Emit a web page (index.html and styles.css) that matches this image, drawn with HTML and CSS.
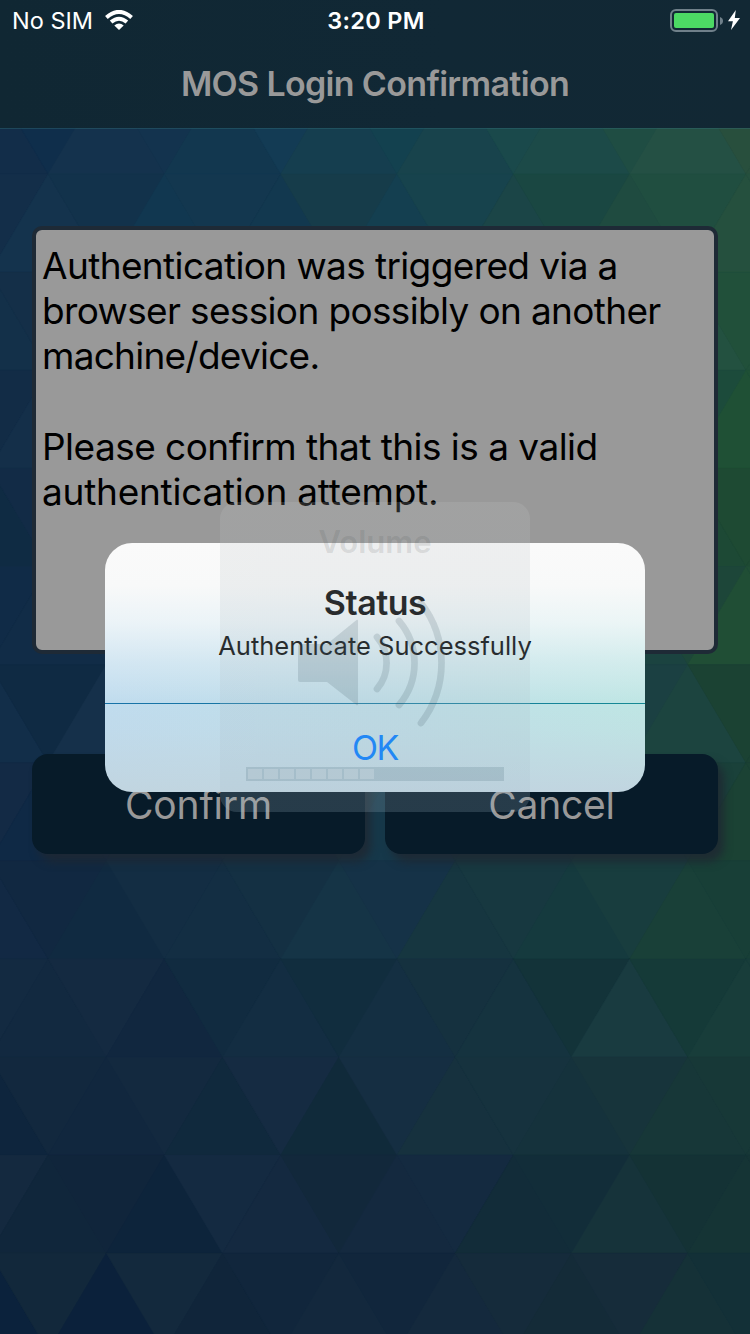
FILE: index.html
```html
<!DOCTYPE html>
<html lang="en">
<head>
<meta charset="utf-8">
<title>MOS Login Confirmation</title>
<link rel="stylesheet" href="styles.css">
</head>
<body>
<div class="screen">
  <svg class="wallpaper" id="wallpaper" viewBox="0 0 750 1334" aria-hidden="true"></svg>
  <header class="header">
    <div class="statusbar">
      <div class="carrier"><span class="carrier-name">No SIM</span>
        <svg class="wifi" viewBox="0 0 28 20"><path d="M14 20L9.3 15.4Q14 11.8 18.7 15.4Z"/><path class="wave" d="M6.1 12Q14 5.4 21.9 12"/><path class="wave" d="M1.4 7.4Q14 -3.6 26.6 7.4"/></svg>
      </div>
      <div class="clock">3:20 PM</div>
      <div class="power">
        <div class="battery"><div class="charge"></div></div>
        <svg class="nub" viewBox="0 0 3 8"><path d="M0 0Q3 1.2 3 4T0 8Z"/></svg>
        <svg class="bolt" viewBox="0 0 12 20"><path d="M7.8 0L0 11.2H4.9L3 20L12 8H6.8Z"/></svg>
      </div>
    </div>
    <h1 class="title">MOS Login Confirmation</h1>
  </header>
  <main class="content">
    <div class="notice">
      <p><span class="l1">Authentication was triggered via a</span><br><span class="l2">browser session possibly on another</span><br><span class="l3">machine/device.</span></p>
      <p><span class="l4">Please confirm that this is a valid</span><br><span class="l5">authentication attempt.</span></p>
    </div>
    <div class="actions">
      <button class="btn">Confirm</button>
      <button class="btn">Cancel</button>
    </div>
  </main>
  <section class="alert" role="alertdialog">
    <div class="alert-body">
      <h2 class="alert-title">Status</h2>
      <p class="alert-text">Authenticate Successfully</p>
    </div>
    <button class="alert-ok">OK</button>
  </section>
  <section class="volume">
    <div class="volume-title">Volume</div>
    <svg class="speaker" viewBox="0 0 150 126">
      <path class="cone" d="M2 45H29L58.5 21Q60 20 60 22V105Q60 107 58.5 106L29 83H2Q0 83 0 81V47Q0 45 2 45Z"/>
      <path class="sound" d="M79 38A40 40 0 0 1 79 90"/>
      <path class="sound" d="M101 22A64.6 64.6 0 0 1 101 106"/>
      <path class="sound" d="M123 4A98 98 0 0 1 123 124"/>
    </svg>
    <div class="level"><i></i><i></i><i></i><i></i><i></i><i></i><i></i><i></i></div>
  </section>
</div>
<script src="wallpaper.js"></script>
</body>
</html>
```
FILE: styles.css
```css
* { box-sizing: border-box; }
body { margin: 0; font-family: Inter, "Liberation Sans", sans-serif; }
h1, h2, p { margin: 0; }
button { border: 0; padding: 0; font: inherit; }
.screen { position: relative; width: 750px; height: 1334px; overflow: hidden; background: #12293f; }
.wallpaper { position: absolute; inset: 0; width: 750px; height: 1334px; }

.header { position: relative; height: 129px; background: linear-gradient(90deg, #102733, #112835 60%, #122834); background-clip: padding-box; border-bottom: 1px solid rgba(50, 110, 120, .4); }
.statusbar { display: grid; grid-template-columns: 1fr auto 1fr; align-items: center; height: 41px; padding: 0 10px 0 12px; color: #fff; font-size: 24px; }
.carrier { display: flex; align-items: center; gap: 12px; }
.carrier-name { font-size: 23.5px; letter-spacing: 0; }
.wifi { width: 28px; height: 20px; margin-top: -1px; fill: #fff; }
.wave { fill: none; stroke: #fff; stroke-width: 4; }
.clock { font-weight: 600; font-size: 23.5px; letter-spacing: .3px; }
.power { display: flex; align-items: center; justify-content: flex-end; }
.battery { width: 48px; height: 23px; border: 2px solid #70808a; border-radius: 6px; padding: 2px; }
.charge { height: 15px; border-radius: 2px; background: #4cd964; }
.nub { width: 3px; height: 8px; margin-left: 2px; fill: #70808a; }
.bolt { width: 12px; height: 20px; margin: -1px 0 0 5px; fill: #fff; }
.title { margin-top: 22px; text-align: center; font-size: 34px; line-height: 41px; font-weight: 600; color: #999; letter-spacing: -.67px; }

.content { position: relative; padding: 97px 32px 0; }
.notice { height: 428px; padding: 13px 6px; border: 4px solid #1e2a36; border-radius: 10px; background: #999; color: #000; font-size: 37px; line-height: 45.2px; white-space: nowrap; }
.notice p + p { margin-top: 45px; }
.l1 { letter-spacing: -.62px; }
.l2 { letter-spacing: -.65px; }
.l3 { letter-spacing: -.75px; }
.l4 { letter-spacing: -.53px; }
.l5 { letter-spacing: -.25px; }
.actions { display: grid; grid-template-columns: 1fr 1fr; gap: 20px; margin-top: 100px; }
.btn { height: 100px; border-radius: 16px; background: #071b29; color: #999; font-size: 39px; letter-spacing: -.2px; box-shadow: 6px 8px 8px rgba(30, 40, 50, .85); }

.alert { position: absolute; left: 105px; top: 543px; width: 540px; height: 249px; display: flex; flex-direction: column; border-radius: 27px; overflow: hidden; text-align: center;
  background: linear-gradient(180deg, #fafafa 0, #f8f9f9 17%, rgba(246, 249, 250, .8) 32%, rgba(240, 246, 249, .4) 48%, rgba(220, 235, 242, 0) 64%, rgba(193, 212, 224, .2) 75%, #c1d5e0 100%), linear-gradient(90deg, #c0dcee, #bfdfe9 50%, #bfe6e4); }
.alert-body { height: 161px; padding-top: 39px; border-bottom: 1px solid; border-image: linear-gradient(90deg, #1873a8, #1478a0 50%, #178a94) 1; }
.alert-title { font-size: 34px; line-height: 41px; font-weight: 600; color: #040506; letter-spacing: -.5px; }
.alert-text { margin-top: 7px; font-size: 25.5px; line-height: 32px; color: #040607; }
.alert-ok { flex: 1; padding-bottom: 2px; background: none; color: #007aff; font-size: 34px; letter-spacing: -1.5px; }

.volume { position: absolute; left: 220px; top: 502px; width: 310px; height: 310px; border-radius: 17px; background: linear-gradient(180deg, rgba(193, 195, 195, .2), rgba(165, 190, 205, .2)); }
.volume-title { padding-top: 20px; text-align: center; font-size: 31px; line-height: 40px; font-weight: 600; color: rgba(70, 75, 75, .14); }
.speaker { display: block; width: 150px; height: 126px; margin: 37px 0 0 78px; overflow: visible; }
.cone { fill: rgba(60, 85, 95, .17); }
.sound { fill: none; stroke: rgba(60, 85, 95, .17); stroke-width: 6.7; stroke-linecap: round; }
.level { display: flex; gap: 2px; width: 258px; height: 14px; margin: 42px 0 0 26px; padding: 2px; background: rgba(90, 125, 140, .24); }
.level i { width: 14px; background: rgba(220, 230, 235, .3); }
```
FILE: wallpaper.js
```js
// Triangular mosaic: every row lists its triangles from left to right.
const rows = [
  "122d49 0f2e4b 14324d 13334e 12374f 133b54 153e4f 13414f 18434c 1a494b 1c4a48 1f4d43 245044 284f3d",
  "132e49 14334d 12324b 113750 13374f 12384f 163c4a 143f50 17434d 1b4547 1a4742 1f4b40 204e40 25503e",
  "133049 142f48 143149 14334a 15364a 15384a 163b4a 173e4a 194148 1b4446 1d4744 1f4b42 235140 21503a",
  "122c46 142f49 143149 14334a 15364a 15384a 163b4a 173e4a 194148 1b4446 1d4744 1f4b42 1c4b3b 1f5035",
  "0f2b43 122b46 143149 14334a 15364a 15384a 163b4a 173e4a 194148 1b4446 1d4744 1f4b42 1d4935 1e4a33",
  "102b47 112c47 122d47 14334a 15364a 15384a 163b4a 173e4a 194148 1b4446 1a4240 1b4340 1d4639 204e35",
  "122e49 0f2a43 15304a 14334a 15364a 15384a 163b4a 173c48 183d46 1a3f44 1b4144 1b4042 1c443f 1b4233",
  "132a45 0f2945 10294a 122d47 132f46 143146 163745 16384a 173a44 183c42 193e40 1a403e 1a413a 1b4234",
  "122944 112841 102a41 132d43 132e43 143043 153446 153247 163640 173840 153a3e 183d3e 194038 183f37",
  "132a41 122940 142a41 11273f 112b40 132d42 112d3e 142f42 15313f 15333f 133339 193b40 153a38 183d3a",
  "0e253d 12283e 11273e 13293f 10293d 152b42 102a3a 152e42 16313e 16323e 15323c 17343b 173738 173837",
  "14293f 10263b 10253b 0d243b 142a41 142940 12283b 14293f 142a40 122c39 122d39 16333a 143235 153435",
  "0b223c 12283b 0b213b 13293d 10253a 11263c 13283d 11263c 14293d 152b3b 142b38 162c3a 153137 133037"
];
const half = 58.15;
const rowHeight = 98.1;
const wallpaper = document.getElementById("wallpaper");
rows.forEach((row, r) => {
  const top = 76 + r * rowHeight;
  const bottom = top + rowHeight;
  const colors = row.split(" ");
  colors.push(colors[colors.length - 1]);
  colors.forEach((color, m) => {
    const x = -10 + m * half;
    const pointsUp = (m + r) % 2 === 0;
    const apex = pointsUp ? top : bottom;
    const base = pointsUp ? bottom : top;
    const p = document.createElementNS("http://www.w3.org/2000/svg", "polygon");
    p.setAttribute("points", `${x},${apex} ${x - half},${base} ${x + half},${base}`);
    p.setAttribute("fill", "#" + color);
    p.setAttribute("stroke", "#" + color);
    p.setAttribute("stroke-width", "0.6");
    wallpaper.appendChild(p);
  });
});
```
